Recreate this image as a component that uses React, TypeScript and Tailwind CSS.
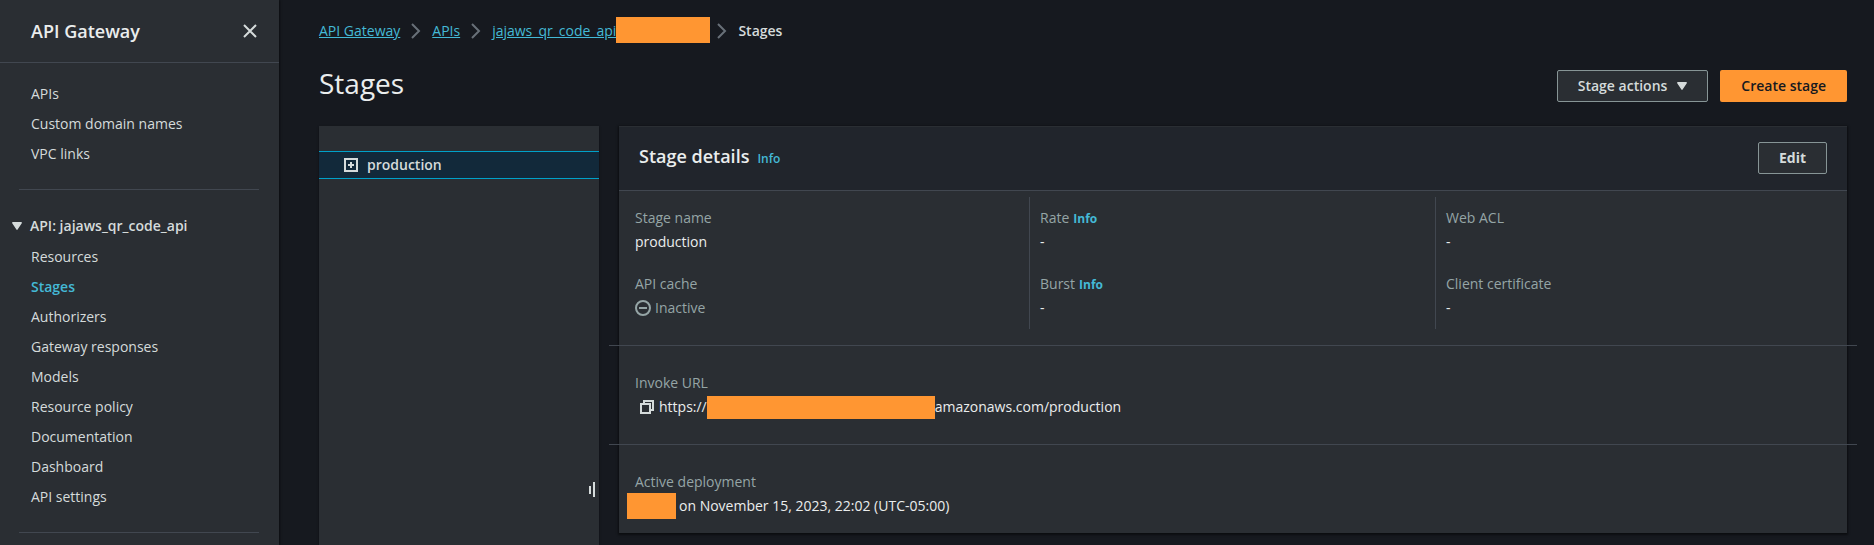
import type { ReactNode } from "react";

const topLinks = ["APIs", "Custom domain names", "VPC links"];
const apiLinks = [
  "Resources",
  "Stages",
  "Authorizers",
  "Gateway responses",
  "Models",
  "Resource policy",
  "Documentation",
  "Dashboard",
  "API settings",
];

function Caret() {
  return (
    <svg viewBox="0 0 10 8" className="h-2 w-2.5 shrink-0" aria-hidden="true">
      <path d="M0.8 0.8h8.4L5 7.2z" fill="#d5dbdb" stroke="#d5dbdb" strokeWidth="1.4" strokeLinejoin="round" />
    </svg>
  );
}

function Chevron() {
  return (
    <svg viewBox="0 0 10 16" className="h-4 w-2.5 shrink-0" fill="none" aria-hidden="true">
      <path d="M1 1l7 7-7 7" stroke="#687078" strokeWidth="2" />
    </svg>
  );
}

function Redacted({ className }: { className: string }) {
  return <span aria-hidden="true" className={`block shrink-0 bg-[#ff9632] ${className}`} />;
}

function NavList({ items, active }: { items: string[]; active?: string }) {
  return (
    <ul>
      {items.map((item) => (
        <li key={item} className="h-[30px] leading-[22px]">
          <a
            href="#"
            aria-current={item === active ? "page" : undefined}
            className={item === active ? "font-semibold text-[#44b9d6]" : "text-[#d5dbdb]"}
          >
            {item}
          </a>
        </li>
      ))}
    </ul>
  );
}

function Field({ label, info, children }: { label: string; info?: boolean; children: ReactNode }) {
  return (
    <div className="flex flex-col gap-0.5 p-2.5">
      <dt className="leading-[22px] text-[#95a5a6]">
        {label}
        {info && (
          <a href="#" className="ml-1 text-xs font-bold text-[#44b9d6]">
            Info
          </a>
        )}
      </dt>
      <dd className="flex h-[22px] items-center leading-[22px] text-[#eaeded]">{children}</dd>
    </div>
  );
}

export default function App() {
  return (
    <div className="flex min-h-screen bg-[#16191f] font-['Open_Sans','Noto_Sans',sans-serif] text-sm text-[#d5dbdb]">
      <aside className="w-[279px] shrink-0 bg-[#2a2e33] shadow-[1px_0_2px_rgba(0,0,0,0.5)]">
        <header className="flex h-[63px] items-center justify-between border-b border-[#414750] pr-[21px] pl-[31px]">
          <h2 className="text-lg leading-[22px] font-semibold text-[#eaeded]">API Gateway</h2>
          <button type="button" aria-label="Close navigation" className="flex">
            <svg viewBox="0 0 16 16" className="size-4" fill="none" aria-hidden="true">
              <path d="M2 2l12 12M14 2L2 14" stroke="#d5dbdb" strokeWidth="2" />
            </svg>
          </button>
        </header>
        <nav aria-label="API Gateway" className="pr-5 pl-[19px]">
          <div className="border-b border-[#414750] px-3 pt-5 pb-4">
            <NavList items={topLinks} />
          </div>
          <div className="border-b border-[#414750] px-3 pt-[25px] pb-4">
            <button type="button" aria-expanded="true" className="-ml-[19px] flex h-[31px] items-start leading-[22px] font-semibold">
              <span className="flex h-[22px] items-center gap-2">
                <Caret />
                API: jajaws_qr_code_api
              </span>
            </button>
            <NavList items={apiLinks} active="Stages" />
          </div>
        </nav>
      </aside>

      <main className="flex min-w-0 flex-1 flex-col pr-[27px] pl-10">
        <nav aria-label="Breadcrumb" className="mt-[17px] flex h-7 items-center gap-[11px] leading-[22px]">
          <a href="#" className="text-[#44b9d6] underline">API Gateway</a>
          <Chevron />
          <a href="#" className="text-[#44b9d6] underline">APIs</a>
          <Chevron />
          <a href="#" className="flex items-center self-stretch text-[#44b9d6] underline">
            jajaws_qr_code_api
            <Redacted className="-mr-1 h-[26px] w-[94px] self-start" />
          </a>
          <Chevron />
          <span aria-current="page" className="font-semibold">Stages</span>
        </nav>

        <div className="mt-5 flex items-start justify-between">
          <h1 className="text-[28px] leading-9 text-[#eaeded]">Stages</h1>
          <div className="mt-[5px] flex gap-3">
            <button type="button" className="flex h-8 items-center gap-2.5 rounded-[2px] border border-[#879596] bg-[#2a2e33] px-5 font-semibold">
              Stage actions
              <Caret />
            </button>
            <button type="button" className="h-8 rounded-[2px] bg-[#ff9632] px-[21px] font-semibold text-[#16191f]">
              Create stage
            </button>
          </div>
        </div>

        <div className="mt-6 flex flex-1 items-stretch gap-5">
          <section aria-label="Stage list" className="relative w-[280px] shrink-0 bg-[#2a2e33] pt-[25px] shadow-[0_1px_2px_rgba(0,0,0,0.5)]">
            <div className="flex h-7 items-center gap-[9px] border-y border-[#00a1c9] bg-[#12293a] pl-[25px]">
              <button type="button" aria-label="Expand production" className="flex">
                <svg viewBox="0 0 14 14" className="size-3.5" fill="none" stroke="#d5dbdb" strokeWidth="2" aria-hidden="true">
                  <path d="M1 1h12v12H1zM7 4v6M4 7h6" />
                </svg>
              </button>
              <a href="#" className="font-semibold">production</a>
            </div>
            <div role="separator" aria-label="Resize panel" className="absolute top-[356px] right-1 flex items-center gap-0.5">
              <span className="h-2 w-0.5 bg-[#d5dbdb]" />
              <span className="h-[15px] w-0.5 bg-[#d5dbdb]" />
            </div>
          </section>

          <section className="min-w-0 flex-1 self-start bg-[#2a2e33] pb-1.5 shadow-[0_1px_2px_1px_rgba(0,0,0,0.5)]">
            <header className="flex h-[65px] items-start justify-between border-t border-b border-t-[#2a2e33] border-b-[#414750] bg-[#21252c] px-5 py-[15px]">
              <h2 className="pt-[3px] text-lg leading-[22px] font-semibold text-[#eaeded]">
                Stage details
                <a href="#" className="ml-2 text-xs font-semibold text-[#44b9d6]">Info</a>
              </h2>
              <button type="button" className="h-8 rounded-[2px] border border-[#879596] bg-[#2a2e33] px-5 font-bold">
                Edit
              </button>
            </header>
            <dl>
              <div className="mx-[5px] mt-1.5 mb-4 grid grid-cols-3">
                <div className="border-r border-[#414750] pl-px">
                  <Field label="Stage name">production</Field>
                  <Field label="API cache">
                    <span className="flex items-center gap-1 text-[#95a5a6]">
                      <svg viewBox="0 0 16 16" className="size-4" fill="none" stroke="#95a5a6" strokeWidth="2" aria-hidden="true">
                        <circle cx="8" cy="8" r="7" />
                        <path d="M4 8h8" />
                      </svg>
                      Inactive
                    </span>
                  </Field>
                </div>
                <div className="border-r border-[#414750]">
                  <Field label="Rate" info>-</Field>
                  <Field label="Burst" info>-</Field>
                </div>
                <div>
                  <Field label="Web ACL">-</Field>
                  <Field label="Client certificate">-</Field>
                </div>
              </div>
              <div className="-mx-2.5 border-t border-[#414750] px-4 py-4">
                <Field label="Invoke URL">
                  <button type="button" aria-label="Copy URL" className="mr-1 ml-1 flex">
                    <svg viewBox="0 0 16 16" className="size-4" fill="none" stroke="#d5dbdb" strokeWidth="2" aria-hidden="true">
                      <path d="M2 5h9v9H2zM5 5V2h9v9h-3" />
                    </svg>
                  </button>
                  https://
                  <Redacted className="h-[23px] w-[228px]" />
                  amazonaws.com/production
                </Field>
              </div>
              <div className="-mx-2.5 border-t border-[#414750] px-4 pt-4">
                <Field label="Active deployment">
                  <Redacted className="mr-[3px] -ml-2 h-[26px] w-[49px]" />
                  on November 15, 2023, 22:02 (UTC-05:00)
                </Field>
              </div>
            </dl>
          </section>
        </div>
      </main>
    </div>
  );
}
